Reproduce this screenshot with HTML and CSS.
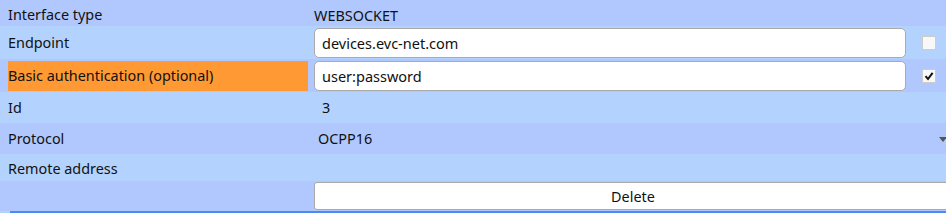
FILE: index.html
```html
<!DOCTYPE html>
<html lang="en">
<head>
    <meta charset="UTF-8">
    <title>Connection settings</title>
    <link rel="stylesheet" href="styles.css">
</head>
<body>
    <div class="settings">
        <div class="row dark first">
            <div class="label">Interface type</div>
            <div class="value">WEBSOCKET</div>
            <div class="check"></div>
        </div>
        <div class="row light">
            <div class="label">Endpoint</div>
            <div class="value"><input type="text" class="field" value="devices.evc-net.com"></div>
            <div class="check"><span class="box"></span></div>
        </div>
        <div class="row dark">
            <div class="label highlight">Basic authentication (optional)</div>
            <div class="value"><input type="text" class="field" value="user:password"></div>
            <div class="check">
                <span class="box">
                    <svg width="10" height="10" viewBox="0 0 10 10"><path d="M1.5 5.2 L4 8 L8.6 1.8" fill="none" stroke="#111" stroke-width="2"/></svg>
                </span>
            </div>
        </div>
        <div class="row light mid">
            <div class="label">Id</div>
            <div class="value pad">3</div>
            <div class="check"></div>
        </div>
        <div class="row dark mid">
            <div class="label">Protocol</div>
            <div class="value select">OCPP16</div>
            <div class="check arrow-cell">
                <svg width="8" height="5" viewBox="0 0 8 5"><path d="M0 0 H8 L4 5 Z" fill="#555"/></svg>
            </div>
        </div>
        <div class="row light short">
            <div class="label">Remote address</div>
            <div class="value"></div>
            <div class="check"></div>
        </div>
        <div class="row dark last">
            <div class="label"></div>
            <button class="delete">Delete</button>
        </div>
    </div>
    <div class="focus-line"></div>
</body>
</html>
```

FILE: styles.css
```css
body {
    margin: 0;
    font-family: "Noto Sans", sans-serif;
    font-size: 14.4px;
    color: #111;
    background-color: #b3d3fe;
    overflow: hidden;
}

.settings {
    width: 952px;
}

.row {
    display: grid;
    grid-template-columns: 300px 592px 1fr;
    column-gap: 6px;
    align-items: center;
    padding-left: 8px;
    height: 33px;
}

.row.first {
    height: 26px;
}

.row.short {
    height: 27px;
}

.row.mid {
    height: 31px;
}

.row.last {
    height: 30px;
    grid-template-columns: 300px 1fr;
}

.dark {
    background-color: #b0c8fe;
}

.light {
    background-color: #b3d3fe;
}

.label {
    height: 30px;
    line-height: 30px;
}

.label.highlight {
    background-color: #ff9933;
}

.value.pad {
    padding-left: 8px;
}

.value.select {
    padding-left: 4px;
}

.field {
    box-sizing: border-box;
    width: 100%;
    height: 30px;
    margin: 0;
    padding: 0 7px;
    border: 1px solid #aaa;
    border-radius: 5px;
    background: #fff;
    font-family: "Noto Sans", sans-serif;
    font-size: 14.5px;
    color: #111;
}

.check {
    padding-left: 10px;
    display: flex;
    align-items: center;
}

.check.arrow-cell {
    padding-left: 27px;
    padding-top: 2px;
}

.box {
    box-sizing: border-box;
    width: 14px;
    height: 14px;
    border: 1px solid #ccc;
    background: #f8f8f8;
    display: flex;
    align-items: center;
    justify-content: center;
}

.delete {
    height: 28px;
    margin: 0;
    border: 1px solid #aaa;
    border-radius: 3px;
    background: #fff;
    font-family: "Noto Sans", sans-serif;
    font-size: 14.4px;
    color: #111;
}

.focus-line {
    margin-left: 10px;
    height: 2px;
    background-color: #4a8af4;
}
```
